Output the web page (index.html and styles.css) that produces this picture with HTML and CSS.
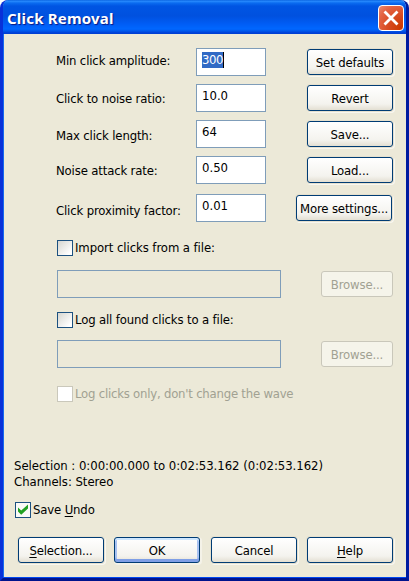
FILE: index.html
```
<!DOCTYPE html>
<html lang="en">
<head>
<meta charset="utf-8">
<title>Click Removal</title>
<link rel="stylesheet" href="styles.css">
</head>
<body>
<main class="window">
  <header class="titlebar">
    <h1><span>Click Removal</span></h1>
    <button class="close" aria-label="Close"><svg width="26" height="26" viewBox="0 0 26 26"><path d="M7.5 7.5L18.5 18.5M18.5 7.5L7.5 18.5" fill="none" stroke="#fff" stroke-width="2.8" stroke-linecap="square"/></svg></button>
  </header>
  <section class="content">
    <div class="row r1"><label><span>Min click amplitude:</span></label><div class="input"><span class="selected">300</span></div><button class="btn"><span>Set defaults</span></button></div>
    <div class="row r2"><label><span>Click to noise ratio:</span></label><div class="input"><span>10.0</span></div><button class="btn"><span>Revert</span></button></div>
    <div class="row r3"><label><span>Max click length:</span></label><div class="input"><span>64</span></div><button class="btn"><span>Save...</span></button></div>
    <div class="row r4"><label><span>Noise attack rate:</span></label><div class="input"><span>0.50</span></div><button class="btn"><span>Load...</span></button></div>
    <div class="row r5"><label><span>Click proximity factor:</span></label><div class="input"><span>0.01</span></div><button class="btn more"><span>More settings...</span></button></div>
    <div class="check import"><i class="box"></i><span>Import clicks from a file:</span></div>
    <div class="file"><div class="path"></div><button class="btn browse" disabled><span>Browse...</span></button></div>
    <div class="check log"><i class="box"></i><span>Log all found clicks to a file:</span></div>
    <div class="file"><div class="path"></div><button class="btn browse" disabled><span>Browse...</span></button></div>
    <div class="check only off"><i class="box"></i><span>Log clicks only, don't change the wave</span></div>
    <div class="info"><p><span class="range">Selection : 0:00:00.000 to 0:02:53.162 (0:02:53.162)</span></p><p><span>Channels: Stereo</span></p></div>
    <div class="check undo"><i class="box"><svg width="14" height="14" viewBox="0 0 14 14"><path d="M2 4.4L5.2 7.6L12 1.4V5.4L5.2 11.8L2 8.5Z" fill="#21a121"/></svg></i><span>Save <u>U</u>ndo</span></div>
    <footer class="actions"><button class="btn"><span><u>S</u>election...</span></button><button class="btn ok"><span>OK</span></button><button class="btn"><span>Cancel</span></button><button class="btn"><span><u>H</u>elp</span></button></footer>
  </section>
</main>
</body>
</html>
```
FILE: styles.css
```
* { box-sizing: border-box; }
html, body { margin: 0; width: 409px; height: 581px; overflow: hidden; background: #fff; }
body { font: 13px/16px "DejaVu Sans Condensed", "DejaVu Sans", sans-serif; font-stretch: condensed; color: #000; letter-spacing: -.15px; }
h1, p { margin: 0; }
span { white-space: nowrap; }
u { text-underline-offset: 2px; text-decoration-thickness: 1px; }
.window { width: 409px; height: 581px; border: solid #0831d9; border-width: 0 3px 3px; border-color: #0019cf #001ba0 #00138c #0831d9; border-radius: 8px 8px 0 0; overflow: hidden; background: #ece9d8; box-shadow: inset 0 -1px #0048f1, inset 1px 0 #166aee; }
.titlebar { height: 34px; margin: 0 -3px; padding: 5px 5px 0 7px; display: flex; justify-content: space-between; background: linear-gradient(#0058d8 0, #2b8dff 1px, #0b6cf0 3px, #0055e3 6px, #0051df 16px, #005df5 24px, #0067ff 29px, #0058ea 31px, #003dd7 33px, #0042cf 34px); }
h1 { font: bold 15px/27px "Noto Sans", "Open Sans", sans-serif; color: #fff; text-shadow: 1px 1px 1px #0a1883; letter-spacing: .2px; }
.close { width: 26px; height: 26px; padding: 0; border: 1px solid #fff; border-radius: 4px; background: radial-gradient(circle at 90% 90%, #cc3900, #d74a20 40%, #e46444 75%, #ea8b70); }
.close svg { display: block; margin: -1px; }
.content { padding: 14px 13px 0 12px; }
.row { height: 28px; margin-bottom: 8px; padding-left: 41px; display: flex; align-items: center; }
.row label { width: 140px; }
.r1 label { padding-bottom: 2px; }
.r2 label { padding-top: 1px; }
.r3 label { padding-top: 4px; }
.r4 { margin-bottom: 10px; }
.r4 label { padding-top: 1px; }
.r5 label { padding-top: 5px; }
.input { width: 70px; height: 28px; border: 1px solid #7f9db9; background: #fff; padding: 3px 5px; letter-spacing: 0; }
.selected { display: inline-block; height: 16px; background: #316ac5; color: #fff; letter-spacing: -.4px; border-right: 1px solid #000; }
.btn { width: 86px; height: 26px; padding: 1px 0 0; border: 1px solid #003c74; border-radius: 3px; background: linear-gradient(#fff, #f4f3ee 75%, #e3dfd2); box-shadow: 0 0 0 1px #e5e0ce, 1px 1px 0 1px #f8f7f1; font: inherit; letter-spacing: inherit; color: #000; text-align: center; white-space: nowrap; }
.row .btn { margin-left: auto; }
.row .more { width: 96px; margin-right: 1px; }
.check { display: flex; align-items: center; gap: 2px; height: 16px; }
.box { width: 16px; height: 16px; border: 1px solid #1c5180; background: linear-gradient(135deg, #d6d6d0, #fff 85%); flex: none; }
.box svg { display: block; }
.import, .log, .only { margin-left: 42px; }
.import { margin-top: 18px; letter-spacing: -.08px; }
.file { display: flex; align-items: center; padding-left: 42px; height: 28px; margin-top: 14px; }
.path { width: 224px; height: 28px; border: 1px solid #7f9db9; }
.browse { width: 72px; margin-left: 40px; }
.btn:disabled { color: #a1a192; border-color: #c9c7ba; background: #f5f4ea; box-shadow: none; }
.log { margin-top: 14px; }
.log + .file { margin-top: 12px; }
.only { margin-top: 18px; letter-spacing: -.22px; }
.off { color: #a1a192; }
.off .box { border-color: #cac8bb; background: #fff; }
.info { margin-top: 56px; margin-left: -1px; letter-spacing: -.03px; }
.undo { margin-top: 12px; }
.undo .box { background: #fafaf7; }
.actions { margin: 19px -1px 0 3px; display: grid; grid-template-columns: 96px 97px 96px 86px; }
.ok { box-shadow: inset 0 2px #cee7ff, inset 0 -3px #7f9fe6, inset 2px 0 #a8c2f1, inset -2px 0 #a8c2f1, 1px 1px 0 1px #f4f2e8; }
```
